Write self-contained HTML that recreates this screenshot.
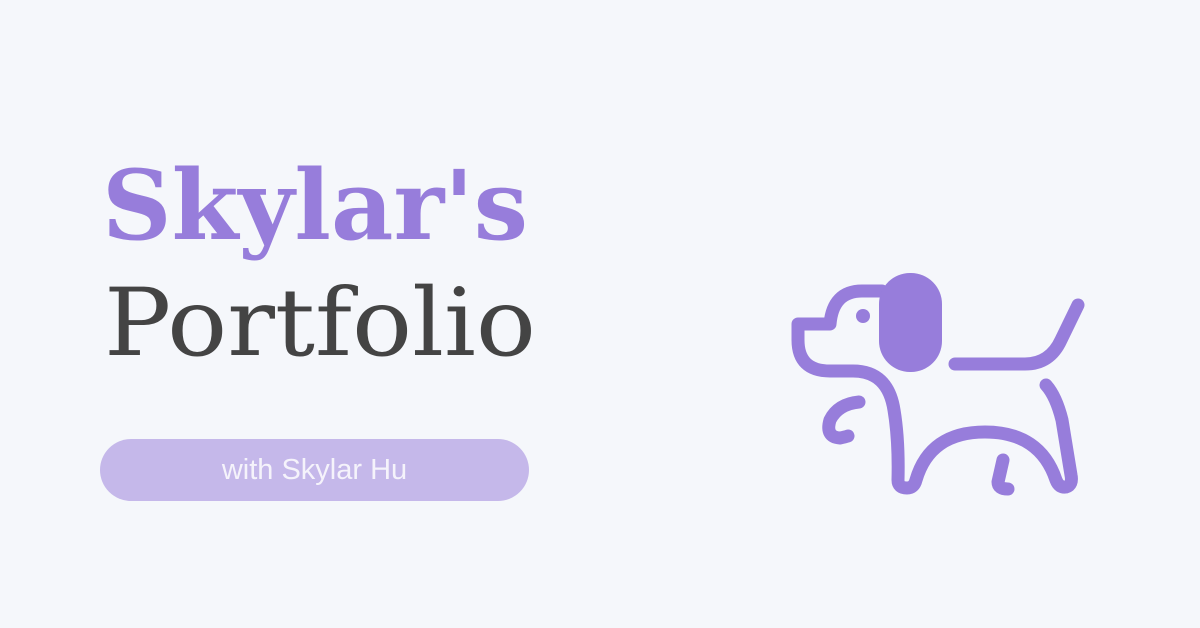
<!DOCTYPE html>
<html><head><style>
html,body{margin:0;padding:0}
body{width:1200px;height:628px;background:#f5f7fb;position:relative;overflow:hidden}
.t1{position:absolute;left:102px;top:158px;font-family:"DejaVu Serif","Liberation Serif",serif;font-weight:bold;font-size:96px;color:#977ddb;line-height:1;white-space:nowrap;transform-origin:0 0}
.t2{position:absolute;left:104px;top:277px;font-family:"DejaVu Serif","Liberation Serif",serif;font-size:94px;color:#444;line-height:1;white-space:nowrap;transform-origin:0 0}
.pill{position:absolute;left:100px;top:439px;width:429px;height:62px;border-radius:31px;background:#c5b8ea;color:#f5f3fb;font-family:"Liberation Sans",sans-serif;font-size:29px;text-align:center;line-height:62px}
</style></head><body>
<div class="t1" id="a">Skylar's</div>
<div class="t2" id="b">Portfolio</div>
<div class="pill">with Skylar Hu</div>
<svg width="1200" height="628" style="position:absolute;left:0;top:0">
<g fill="none" stroke="#977ddb" stroke-width="13" stroke-linecap="round" stroke-linejoin="round">
<path d="M882 291 H862 Q833 291 830 324 H798 V340 Q798 371 830 371 H853 Q888 371 894 410 Q899 440 898 480 Q898 488 907 488 Q914 488 916 480 Q930 432 985 432 Q1040 432 1056 480 Q1059 488 1066 487 Q1073 485 1071 475 L1062 420 Q1056 396 1046 385"/>
<path d="M955 364 H1025 Q1050 364 1061 340 L1078 305"/>
<path d="M859 402 Q838 404 830 420 Q825 437 840 438 Q845 437 848 436"/>
<path d="M1003 460 L998 482 Q998 489 1008 489"/>
</g>
<rect x="879" y="273" width="63" height="99" rx="31" fill="#977ddb"/>
<circle cx="863" cy="316" r="7" fill="#977ddb"/>
</svg>
<script>
function fit(id,w){var e=document.getElementById(id);var r=e.getBoundingClientRect().width;e.style.transform='scaleX('+(w/r)+')';}
fit('a',426);fit('b',432);
</script>
</body></html>
